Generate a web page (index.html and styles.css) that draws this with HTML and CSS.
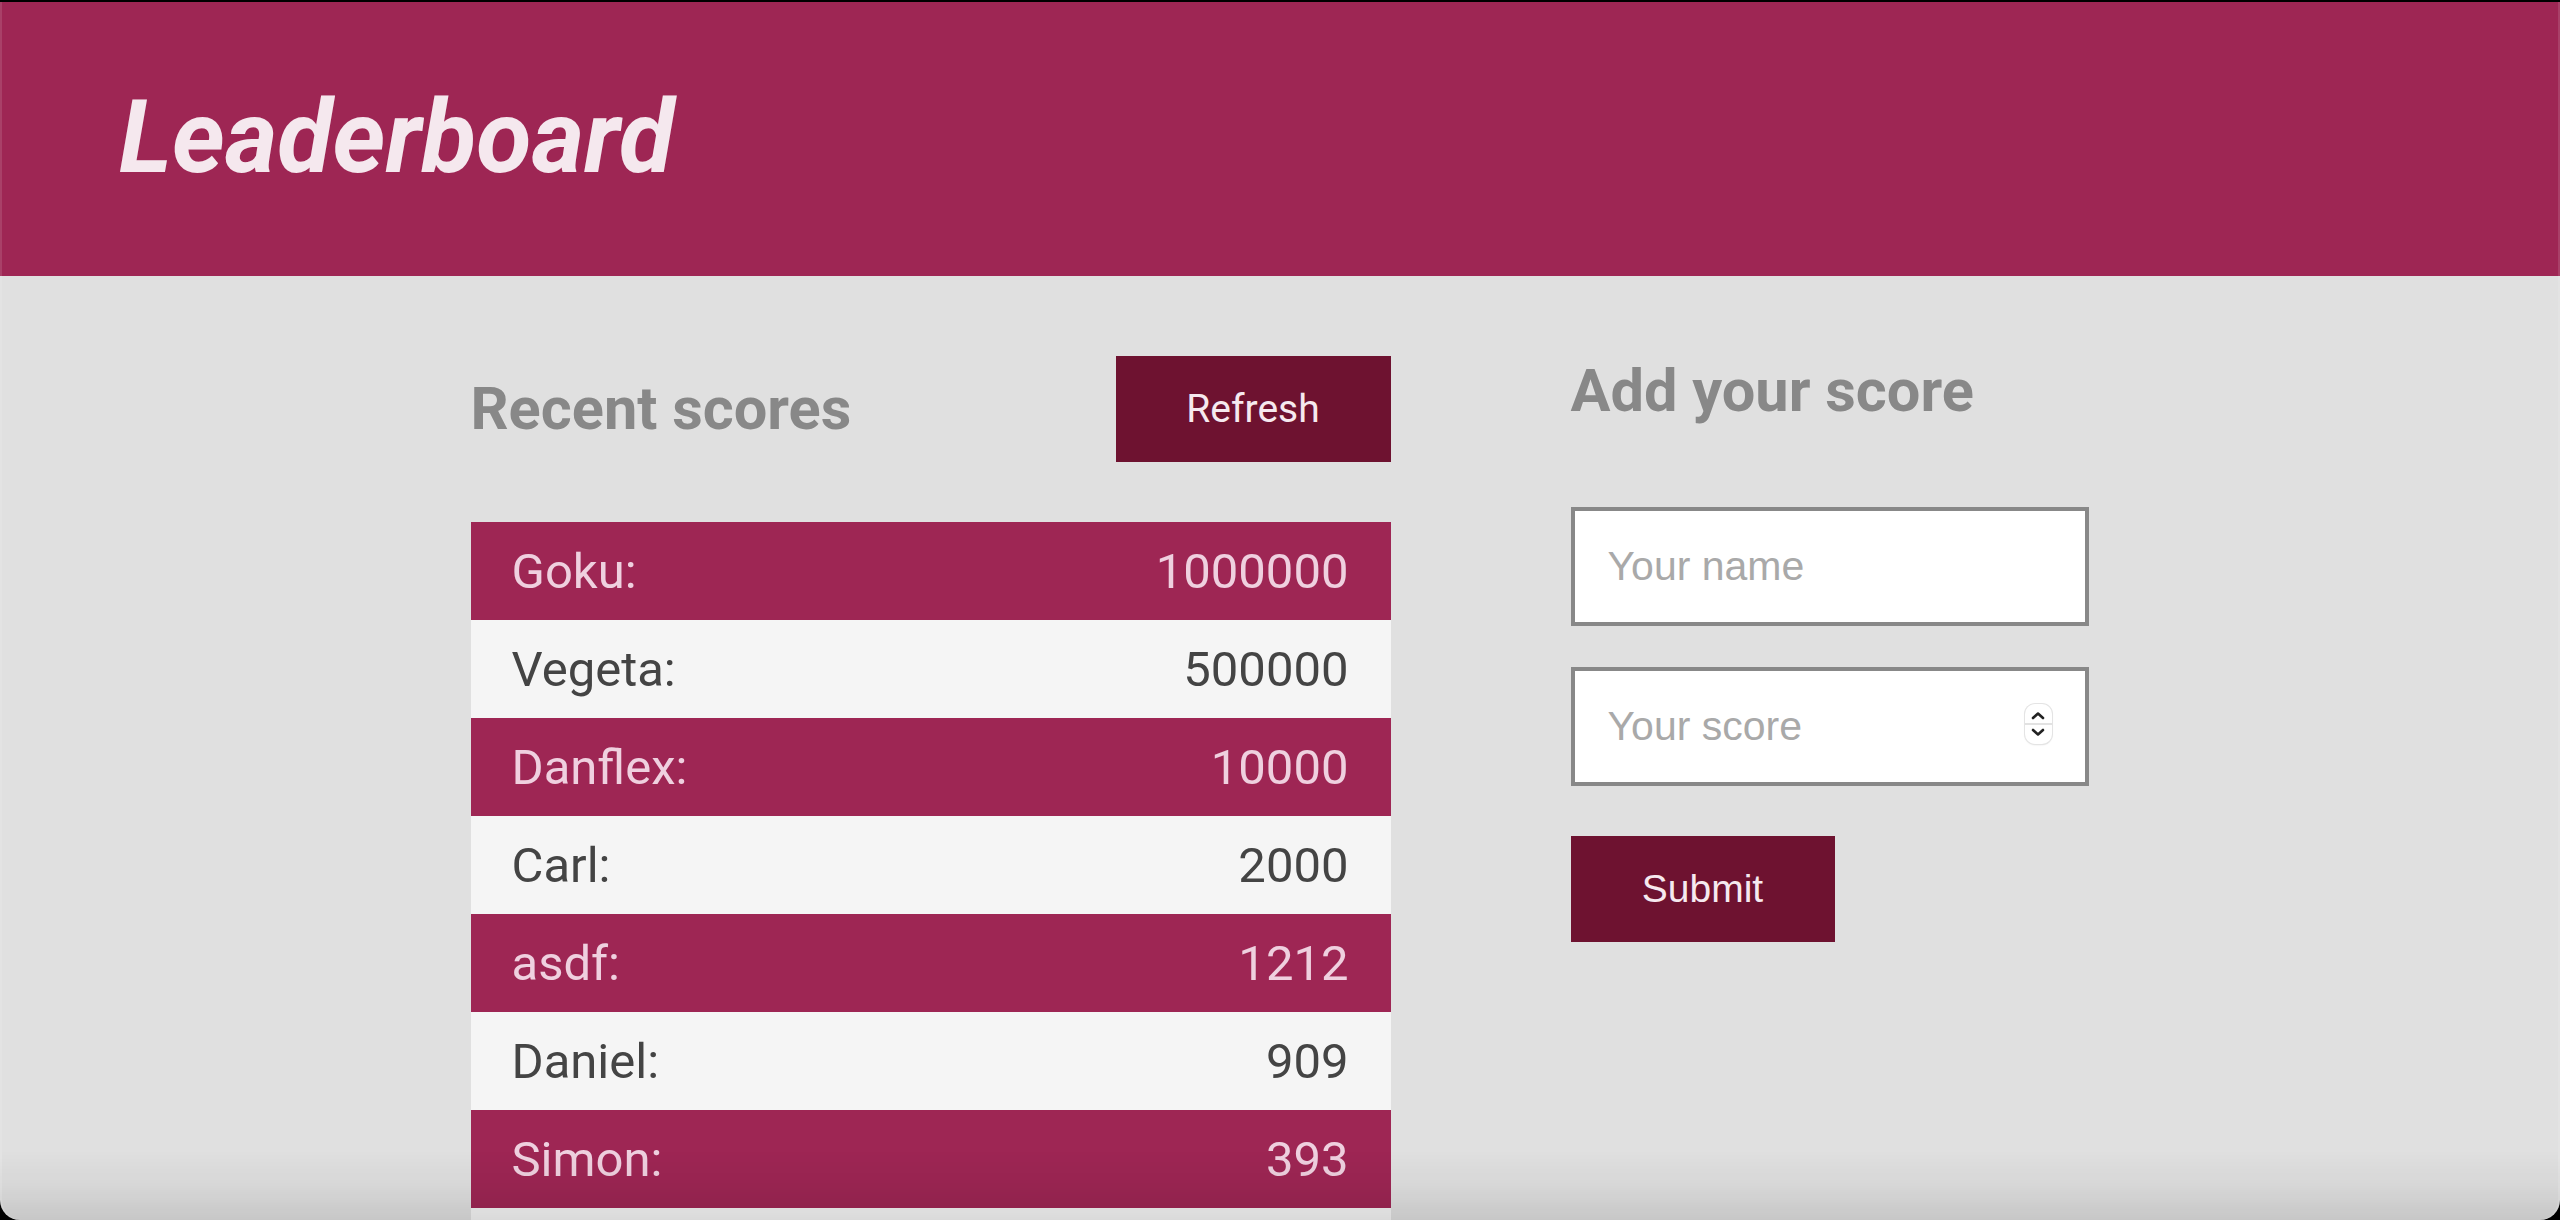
FILE: index.html
```html
<!DOCTYPE html>
<html lang="en">
<head>
<meta charset="utf-8">
<title>Leaderboard</title>
<link rel="stylesheet" href="styles.css">
</head>
<body>
<header class="topbar">
  <h1 class="title">Leaderboard</h1>
</header>
<main class="content">
  <section class="scores">
    <div class="scores-head">
      <h2 class="heading">Recent scores</h2>
      <button class="btn btn-refresh" type="button">Refresh</button>
    </div>
    <div class="board">
      <div class="row"><span>Goku:</span><span>1000000</span></div>
      <div class="row"><span>Vegeta:</span><span>500000</span></div>
      <div class="row"><span>Danflex:</span><span>10000</span></div>
      <div class="row"><span>Carl:</span><span>2000</span></div>
      <div class="row"><span>asdf:</span><span>1212</span></div>
      <div class="row"><span>Daniel:</span><span>909</span></div>
      <div class="row"><span>Simon:</span><span>393</span></div>
      <div class="row"></div>
    </div>
  </section>
  <section class="add">
    <h2 class="heading">Add your score</h2>
    <form class="form">
      <input class="field" type="text" placeholder="Your name">
      <div class="num-wrap">
        <input class="field field-num" type="number" placeholder="Your score">
        <span class="spin">
          <svg viewBox="0 0 28 40" width="28" height="40">
            <path d="M9 14 L14 9.5 L19 14" fill="none" stroke="#222" stroke-width="2.6" stroke-linecap="round" stroke-linejoin="round"/>
            <path d="M9 26 L14 30.5 L19 26" fill="none" stroke="#222" stroke-width="2.6" stroke-linecap="round" stroke-linejoin="round"/>
          </svg>
        </span>
      </div>
      <input class="btn btn-submit" type="submit" value="Submit">
    </form>
  </section>
</main>
<div class="frame"></div>
</body>
</html>
```

FILE: styles.css
```css
html, body {
  margin: 0;
  padding: 0;
}

body {
  background: #e0e0e0;
  font-family: Roboto, "Liberation Sans", sans-serif;
  min-height: 100vh;
}

.topbar {
  background: #9e2654;
  height: 276px;
  display: flex;
  align-items: center;
  padding-left: 119px;
}

.title {
  margin: 0;
  font-size: 101px;
  font-weight: 700;
  font-style: italic;
  color: #f5e8ee;
  line-height: 1.172;
}

.content {
  display: flex;
  justify-content: center;
  gap: 180px;
  padding: 80px 1px 0 0;
}

.scores {
  width: 920px;
}

.scores-head {
  display: flex;
  justify-content: space-between;
  align-items: center;
  height: 106px;
  margin-bottom: 60px;
}

.heading {
  margin: 0;
  font-size: 59.5px;
  font-weight: 700;
  color: #888888;
  line-height: 70px;
}

.btn {
  border: none;
  border-radius: 0;
  background: #6e1230;
  color: #f6e9ef;
  cursor: pointer;
  padding: 0;
  margin: 0;
}

.btn-refresh {
  width: 275px;
  height: 106px;
  font-family: Roboto, sans-serif;
  font-size: 39px;
}

.board {
  display: flex;
  flex-direction: column;
}

.row {
  height: 98px;
  display: flex;
  justify-content: space-between;
  align-items: center;
  padding: 0 42px 0 41px;
  font-size: 49px;
  background: #f5f5f5;
  color: #444444;
}

.row:nth-child(odd) {
  background: #9e2654;
  color: #efd0df;
}

.add {
  width: 518px;
}

.form {
  display: flex;
  flex-direction: column;
  align-items: flex-start;
  margin-top: 81px;
}

.field {
  box-sizing: border-box;
  width: 518px;
  height: 119px;
  border: 4px solid #888888;
  border-radius: 0;
  background: #ffffff;
  padding: 0 33px;
  font-family: "Liberation Sans", Arial, sans-serif;
  font-size: 41px;
  color: #333;
  outline: none;
  margin: 0;
}

.field::placeholder {
  color: #a9a9a9;
}

.num-wrap {
  position: relative;
  margin-top: 41px;
}

.field-num {
  -moz-appearance: textfield;
}

.field-num::-webkit-outer-spin-button,
.field-num::-webkit-inner-spin-button {
  -webkit-appearance: none;
  margin: 0;
}

.spin {
  position: absolute;
  left: 454px;
  top: 37px;
  width: 27px;
  height: 40px;
  box-sizing: border-box;
  border-radius: 10px;
  background: #ffffff;
  box-shadow: 0 0 0 1px #e4e4e4, 0 1px 2px rgba(0,0,0,0.12);
  overflow: hidden;
}

.spin::after {
  content: "";
  position: absolute;
  left: 0;
  right: 0;
  top: 19px;
  height: 2px;
  background: #e2e2e2;
}

.spin svg {
  display: block;
  margin-left: -1px;
}

.btn-submit {
  width: 264px;
  height: 106px;
  margin-top: 50px;
  font-family: "Liberation Sans", Arial, sans-serif;
  font-size: 39px;
}

.frame {
  position: fixed;
  inset: 0;
  pointer-events: none;
  border-radius: 0 0 20px 20px;
  box-shadow: 0 0 0 40px #000, inset 0 2px 0 #000, inset 2px 0 0 rgba(255,255,255,0.12), inset -2px 0 0 rgba(255,255,255,0.12);
  background: linear-gradient(to bottom, rgba(0,0,0,0) calc(100% - 70px), rgba(0,0,0,0.04) calc(100% - 35px), rgba(0,0,0,0.11) 100%);
}
```
